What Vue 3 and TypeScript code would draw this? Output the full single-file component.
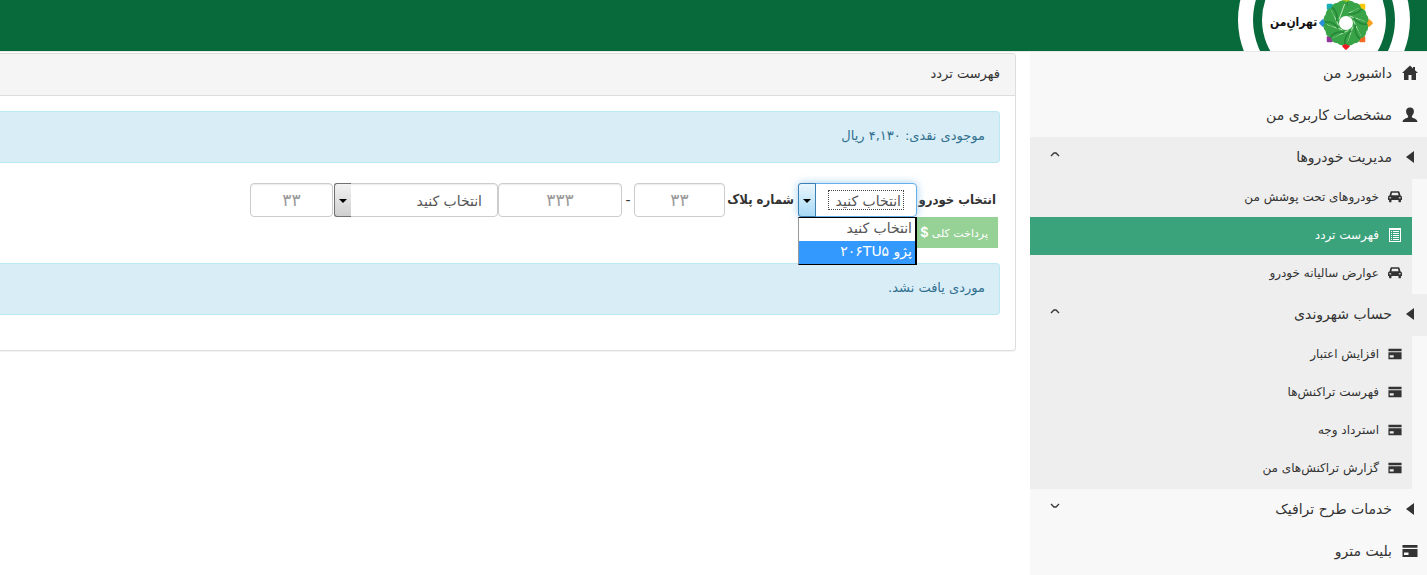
<script setup lang="ts">
import { ref } from 'vue'

type IconName = 'home' | 'user' | 'caret' | 'car' | 'list' | 'card'

interface SubItem {
  label: string
  icon: IconName
  active?: boolean
}

interface MenuItem {
  label: string
  icon: IconName
  toggle?: 'open' | 'closed'
  children?: SubItem[]
}

const menu: MenuItem[] = [
  { label: 'داشبورد من', icon: 'home' },
  { label: 'مشخصات کاربری من', icon: 'user' },
  {
    label: 'مدیریت خودروها',
    icon: 'caret',
    toggle: 'open',
    children: [
      { label: 'خودروهای تحت پوشش من', icon: 'car' },
      { label: 'فهرست تردد', icon: 'list', active: true },
      { label: 'عوارض سالیانه خودرو', icon: 'car' },
    ],
  },
  {
    label: 'حساب شهروندی',
    icon: 'caret',
    toggle: 'open',
    children: [
      { label: 'افزایش اعتبار', icon: 'card' },
      { label: 'فهرست تراکنش‌ها', icon: 'card' },
      { label: 'استرداد وجه', icon: 'card' },
      { label: 'گزارش تراکنش‌های من', icon: 'card' },
    ],
  },
  { label: 'خدمات طرح ترافیک', icon: 'caret', toggle: 'closed' },
  { label: 'بلیت مترو', icon: 'card' },
]

const icons: Record<IconName, { box: number; path: string }> = {
  home: {
    box: 16,
    path: 'M8 0.5 L0 8 H2 V15 H6.5 V10 H9.5 V15 H14 V8 H16 L13 5.2 V2 H11 V3.4 Z',
  },
  user: {
    box: 16,
    path: 'M8 0.5 C5.2 0.5 3.9 2.3 4.1 4.6 C4.2 6.6 5 8 6.1 9 V10.2 C5.4 11.2 1 11.2 0.5 15 H15.5 C15 11.2 10.6 11.2 9.9 10.2 V9 C11 8 11.8 6.6 11.9 4.6 C12.1 2.3 10.8 0.5 8 0.5 Z',
  },
  caret: { box: 16, path: 'M12 2 V14 L4 8 Z' },
  car: {
    box: 16,
    path: 'M4.3 1.5 H11.7 C12.6 1.5 13.1 2 13.4 3 L14.3 6.2 C15.5 6.6 16 7.3 16 8.4 V11.5 H14.8 V13 C14.8 14.5 12 14.5 12 13 V11.5 H4 V13 C4 14.5 1.2 14.5 1.2 13 V11.5 H0 V8.4 C0 7.3 0.5 6.6 1.7 6.2 L2.6 3 C2.9 2 3.4 1.5 4.3 1.5 Z M4.6 3 L3.9 6 H12.1 L11.4 3 Z M1.5 8.2 V9.4 L3.6 9.6 V8.4 Z M14.5 8.2 V9.4 L12.4 9.6 V8.4 Z',
  },
  list: {
    box: 14,
    path: 'M1 0 H13 V14 H1 Z M2 2 V13 H12 V2 Z M3 3 H4 V4 H3 Z M5 3 H11 V4 H5 Z M3 5 H4 V6 H3 Z M5 5 H11 V6 H5 Z M3 7 H4 V8 H3 Z M5 7 H11 V8 H5 Z M3 9 H4 V10 H3 Z M5 9 H11 V10 H5 Z M3 11 H4 V12 H3 Z M5 11 H11 V12 H5 Z',
  },
  card: { box: 16, path: 'M0.5 2 H15.5 V4.8 H0.5 Z M0.5 6 H15.5 V14 H0.5 Z M2 9.5 V12 H6.5 V9.5 Z' },
}

const angles = [0, 45, 90, 135, 180, 225, 270, 315]
const beadColors = ['#a5c822', '#fbc90a', '#f7a01c', '#f26a24', '#ed1c24', '#94359a', '#2a8fd4', '#19adb5']

const vehicle = ref('')
const plateLetter = ref('')
const listOpen = ref(true)
const vehicleOptions = [
  { value: '', label: 'انتخاب کنید' },
  { value: '206', label: 'پژو ۲۰۶TU۵' },
]
const highlighted = ref(1)

function choose(value: string): void {
  vehicle.value = value
  listOpen.value = false
}
</script>

<template>
  <div class="page" dir="rtl">
    <header class="topbar">
      <a class="brand" href="#" aria-label="تهران من">
        <svg viewBox="0 0 174 51" class="brand-art">
          <circle cx="87" cy="20" r="86" fill="#fff" />
          <circle cx="87" cy="20" r="71" fill="#08693b" />
          <circle cx="87" cy="20" r="62" fill="#fff" />
          <g transform="translate(109 23)">
            <g v-for="(a, i) in angles" :key="a" :transform="`rotate(${a})`">
              <rect x="-3" y="-26" width="6" height="6" rx="1" :fill="beadColors[i]" transform="rotate(45 0 -23)" />
            </g>
            <g v-for="a in angles" :key="`p${a}`" :transform="`rotate(${a + 22.5})`">
              <path d="M-8 -19 Q-5 -24 0 -22 Q6 -24 8.500 -19 Q8 -12 3 -5 L-6 -5 Q-10 -12 -8 -19 Z" fill="#39a447" />
              <path d="M-8 -5 Q-3 -13 -7 -20" fill="none" stroke="#258638" stroke-width="1.500" />
              <path d="M-5 -6 L6 -18" stroke="#d3efcb" stroke-width="0.800" />
            </g>
            <circle r="7" fill="#fff" />
          </g>
        </svg>
        <span class="brand-name">تهرانِ‌من</span>
      </a>
    </header>

    <div class="layout">
      <nav class="sidebar">
        <ul class="menu">
          <li v-for="item in menu" :key="item.label">
            <a href="#" class="row" :class="{ expanded: item.children }">
              <svg class="icon" :viewBox="`0 0 ${icons[item.icon].box} ${icons[item.icon].box}`">
                <path :d="icons[item.icon].path" fill-rule="evenodd" />
              </svg>
              <span>{{ item.label }}</span>
              <svg v-if="item.toggle" class="chevron" :class="item.toggle" viewBox="0 0 10 6">
                <path d="M1 5 L4 2 H6 L9 5" />
              </svg>
            </a>
            <ul v-if="item.children" class="submenu">
              <li v-for="sub in item.children" :key="sub.label">
                <a href="#" class="subrow" :class="{ active: sub.active }">
                  <svg class="icon small" :viewBox="`0 0 ${icons[sub.icon].box} ${icons[sub.icon].box}`">
                    <path :d="icons[sub.icon].path" fill-rule="evenodd" />
                  </svg>
                  <span>{{ sub.label }}</span>
                </a>
              </li>
            </ul>
          </li>
        </ul>
      </nav>

      <main class="content">
        <section class="panel">
          <h1 class="panel-heading">فهرست تردد</h1>
          <div class="panel-body">
            <div class="alert">موجودی نقدی: ۴,۱۳۰ ریال</div>
            <form class="filters" @submit.prevent>
              <div class="fields">
                <label class="vehicle-label" for="vehicle">انتخاب خودرو</label>
                <div class="picker focused">
                  <select id="vehicle" v-model="vehicle" class="control">
                    <option v-for="o in vehicleOptions" :key="o.value" :value="o.value">{{ o.label }}</option>
                  </select>
                  <span class="focus-ring"></span>
                  <span class="arrow"></span>
                  <ul v-if="listOpen" class="options">
                    <li
                      v-for="(o, i) in vehicleOptions"
                      :key="o.value"
                      :class="{ highlighted: i === highlighted }"
                      @mouseenter="highlighted = i"
                      @click="choose(o.value)"
                    >{{ o.label }}</li>
                  </ul>
                </div>
                <label class="plate-label" for="plate-a">شماره پلاک</label>
                <input id="plate-a" class="control plate-a" type="text" placeholder="۳۳" />
                <span class="dash">-</span>
                <input class="control plate-b" type="text" placeholder="۳۳۳" aria-label="سه رقم پلاک" />
                <div class="picker letter">
                  <select v-model="plateLetter" class="control" aria-label="حرف پلاک">
                    <option value="">انتخاب کنید</option>
                  </select>
                  <span class="arrow"></span>
                </div>
                <input class="control plate-c" type="text" placeholder="۳۳" aria-label="دو رقم پلاک" />
              </div>
              <button type="submit" class="pay" disabled>پرداخت کلی <span class="dollar">$</span></button>
            </form>
            <div class="alert">موردی یافت نشد.</div>
          </div>
        </section>
      </main>
    </div>
  </div>
</template>

<style>
body {
  background: #fff;
}
</style>

<style scoped>
.page,
.page * {
  box-sizing: border-box;
}
.page {
  min-height: 100vh;
  display: flex;
  flex-direction: column;
  overflow: hidden;
  color: #333;
  font: 14px/20px "DejaVu Sans", sans-serif;
}
ul {
  list-style: none;
  margin: 0;
  padding: 0;
}
a {
  color: inherit;
  text-decoration: none;
}
.topbar {
  height: 52px;
  flex: none;
  background: #08693b;
  border-bottom: 1px solid #e7e7e7;
  padding-right: 16px;
}
.brand {
  display: block;
  position: relative;
  width: 174px;
  height: 51px;
}
.brand-art {
  display: block;
  width: 174px;
  height: 51px;
}
.brand-name {
  position: absolute;
  left: 33px;
  top: 12px;
  color: #111;
  font-family: "DejaVu Sans Condensed", "DejaVu Sans", sans-serif;
  font-size: 12px;
  font-weight: bold;
}
.layout {
  flex: 1;
  display: flex;
}
.sidebar {
  flex: 0 0 397px;
  background: #f8f8f8;
  padding-top: 1px;
}
.row {
  display: flex;
  align-items: center;
  height: 42px;
  padding: 0 9px 2px 20px;
  gap: 10px;
  font-size: 14px;
}
.row.expanded {
  background: #eee;
}
.icon {
  width: 16px;
  height: 16px;
  flex: none;
  fill: #333;
}
.icon.small {
  width: 14px;
  height: 14px;
}
.chevron {
  width: 10px;
  height: 6px;
  margin: 0 auto 6px 0;
  fill: none;
  stroke: #333;
  stroke-width: 1.3;
}
.chevron.closed {
  transform: rotate(180deg);
}
.submenu {
  margin-right: 15px;
  padding-bottom: 1px;
  background: #eee;
}
.subrow {
  display: flex;
  align-items: center;
  height: 38px;
  padding: 0 10px 2px 0;
  gap: 9px;
  font-size: 12px;
}
.subrow.active {
  background: #3aa37b;
  color: #fff;
}
.subrow.active .icon {
  fill: #fff;
}
.content {
  flex: 1;
  min-width: 0;
  padding: 1px 14px 0 0;
}
.panel {
  border: 1px solid #ddd;
  border-left: 0;
  border-radius: 0 4px 4px 0;
  box-shadow: 0 1px 1px rgba(0, 0, 0, 0.05);
  padding-bottom: 35px;
}
.panel-heading {
  margin: 0;
  padding: 10px 15px 11px;
  background: #f5f5f5;
  border-bottom: 1px solid #ddd;
  border-radius: 0 4px 0 0;
  font-size: 13px;
  font-weight: normal;
  line-height: 20px;
}
.panel-body {
  padding: 15px 15px 0 0;
}
.alert {
  height: 52px;
  padding: 14px;
  background: #d9edf7;
  border: 1px solid #bce8f1;
  border-left: 0;
  border-radius: 0 4px 4px 0;
  color: #31708f;
  font-size: 13px;
}
.filters {
  padding: 20px 0 15px;
}
.fields {
  display: flex;
  align-items: center;
}
label {
  flex: none;
  padding-right: 4px;
  font-family: "DejaVu Sans Condensed", "DejaVu Sans", sans-serif;
  font-size: 13px;
  font-weight: bold;
  white-space: nowrap;
}
.vehicle-label {
  width: 83px;
}
.plate-label {
  width: 73px;
}
.control {
  display: block;
  height: 34px;
  border: 1px solid #ccc;
  border-radius: 4px;
  background: #fff;
  box-shadow: inset 0 1px 1px rgba(0, 0, 0, 0.075);
  color: #555;
  font: inherit;
  font-size: 14px;
  outline: 0;
}
input.control {
  padding: 0 12px;
  font-size: 17px;
  text-align: center;
}
input.control::placeholder {
  color: #999;
  opacity: 1;
}
.plate-a {
  width: 91px;
}
.plate-b {
  width: 124px;
}
.plate-c {
  width: 83px;
  margin-right: 1px;
}
.dash {
  width: 12px;
  text-align: center;
}
.picker {
  position: relative;
  width: 119px;
  flex: none;
}
.picker.letter {
  width: 164px;
}
.picker .control {
  width: 100%;
  appearance: none;
  padding: 2px 15px 0 17px;
}
.picker.focused .control {
  border-color: #66afe9;
  box-shadow: 0 0 8px rgba(102, 175, 233, 0.6);
}
.focus-ring {
  position: absolute;
  inset: 7px 13px 7px 30px;
  border: 1px dotted #444;
  pointer-events: none;
}
.arrow {
  position: absolute;
  left: 0;
  top: 0;
  width: 17px;
  height: 34px;
  border: 1px solid #707070;
  border-right: 0;
  border-radius: 3px 0 0 3px;
  background: linear-gradient(#f2f2f2, #cfcfcf);
  pointer-events: none;
}
.focused .arrow {
  width: 18px;
  border: 1px solid #3c7fb1;
  background: linear-gradient(#eaf6fd, #a7d9f5);
}
.arrow::after {
  content: "";
  position: absolute;
  left: 4px;
  top: 15px;
  border: 4px solid transparent;
  border-top-color: #000;
  border-bottom: 0;
}
.options {
  position: absolute;
  top: 34px;
  left: 0;
  right: 0;
  z-index: 2;
  background: #fff;
  border: 1px solid #000;
  border-width: 1px 2px 1px 1px;
  border-left-color: #999;
  color: #555;
  font-size: 14px;
  line-height: 20px;
}
.options li {
  height: 23px;
  padding-right: 3px;
  cursor: default;
}
.options .highlighted {
  background: #3399ff;
  color: #fff;
}
.pay {
  display: block;
  height: 31px;
  margin-right: 2px;
  padding: 0 10px;
  border: 0;
  background: #96d196;
  color: #fff;
  font: inherit;
  font-size: 11px;
  white-space: nowrap;
}
.dollar {
  font-family: "Liberation Sans", sans-serif;
  font-size: 14px;
  font-weight: bold;
}
</style>
